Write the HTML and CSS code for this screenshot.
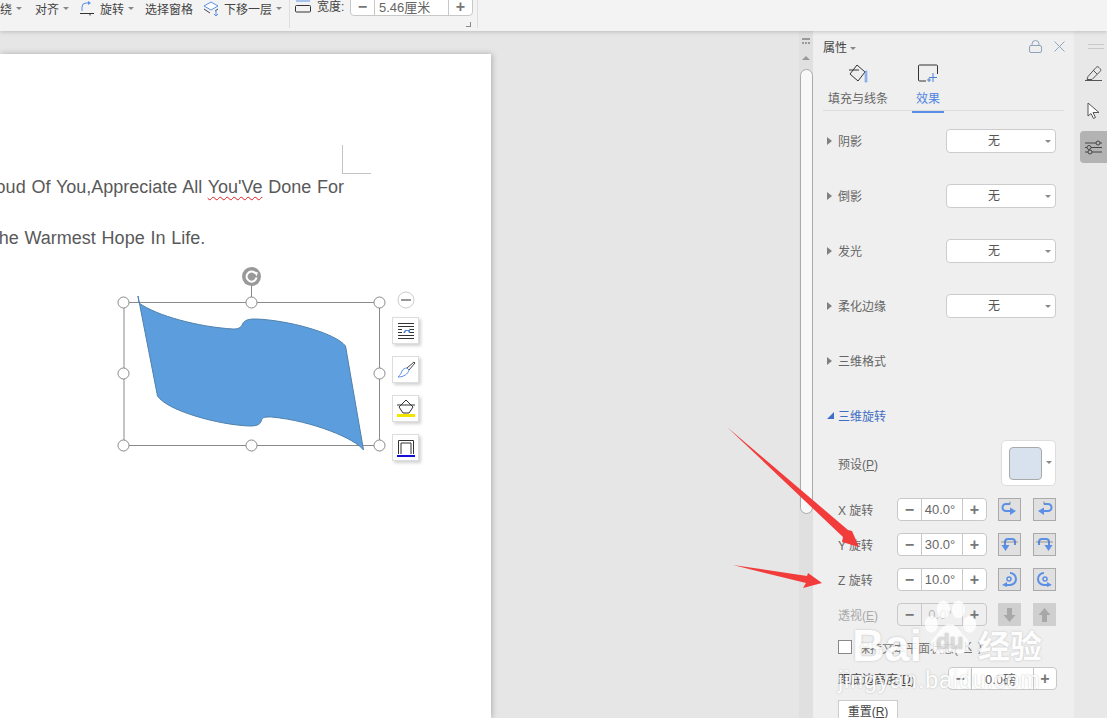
FILE: index.html
```html
<!DOCTYPE html>
<html lang="zh-CN">
  <head>
    <meta charset="UTF-8" />
    <title>属性 - 三维旋转</title>
    <link rel="stylesheet" href="styles.css">
  </head>
  <body>
    <div class="ribbon">
      <div class="rb-group">
        <span class="rb-item rb-first">环绕<i class="caret"></i></span>
        <span class="rb-item rb-align">对齐<i class="caret"></i></span>
        <span class="rb-item rb-rotate">
          <svg width="17" height="16" viewBox="0 0 17 16"><path d="M1 12.500h14M11 12.500v2" fill="none" stroke="#333"/><path d="M3 10V6a4 4 0 0 1 4-4h2" fill="none" stroke="#5b8fe6"/><path d="M9 0l3 2-3 2z" fill="#5b8fe6"/></svg>
          旋转<i class="caret"></i>
        </span>
        <span class="rb-item rb-pane">选择窗格</span>
        <span class="rb-item rb-layer">
          <svg width="17" height="16" viewBox="0 0 17 16"><path d="M8 1l7 4-7 4-7-4z" fill="#fff" stroke="#5b8fe6"/><path d="M1 8l6 4M15 8l-3 2" fill="none" stroke="#444"/><path d="M13 9v6M11 13l2 2 2-2" fill="none" stroke="#5b8fe6"/></svg>
          下移一层<i class="caret"></i>
        </span>
      </div>
      <div class="rb-group rb-size">
        <svg class="width-icon" width="16" height="14" viewBox="0 0 16 14"><rect x="0.500" y="6.500" width="15" height="6.500" rx="1" fill="none" stroke="#333"/><path d="M1 2h14" stroke="#5b8fe6"/></svg>
        <span class="rb-label">宽度:</span>
        <div class="rb-stepper">
          <span class="cell cell-btn">−</span>
          <span class="cell cell-value">5.46厘米</span>
          <span class="cell cell-btn">+</span>
        </div>
        <i class="corner"></i>
      </div>
    </div>

    <div class="main">
      <div class="canvas">
        <div class="page">
          <i class="margin-mark"></i>
          <p class="line line-one">I Am Proud Of You,Appreciate All <span class="misspelt">You'Ve</span> Done For</p>
          <p class="line line-two">You Are The Warmest Hope In Life.</p>
          <div class="drawing">
            <svg width="320" height="210" viewBox="110 264 320 210">
              <rect x="124" y="302.500" width="255.500" height="143" fill="none" stroke="#8a8a8a"/>
              <path d="M251.500 285v17" stroke="#8a8a8a"/>
              <path d="M138 296l1 7c18 13 60 24 94 26 5 0 8-1 9.500-5 2-4 6-5 13-5 32 1 80 14 90 27l18 104c-8-11-50-29-92-33-6 0-9 0-10 3-1 4-3 6-12 6-30-1-82-15-92-30z" fill="#5c9edd" stroke="#4f81ac"/>
              <circle cx="251.500" cy="276.500" r="9.500" fill="#999"/>
              <path d="M255.500 273.500a5 5 0 1 0 1 4" fill="none" stroke="#fff" stroke-width="2"/>
              <path d="M254 271.500l4 1-1.500 4z" fill="#fff"/>
              <g fill="#fff" stroke="#888">
                <circle cx="123.500" cy="302.500" r="5.500"/>
                <circle cx="251.500" cy="302.500" r="5.500"/>
                <circle cx="379.500" cy="302.500" r="5.500"/>
                <circle cx="123.500" cy="373.500" r="5.500"/>
                <circle cx="379.500" cy="373.500" r="5.500"/>
                <circle cx="123.500" cy="445.500" r="5.500"/>
                <circle cx="251.500" cy="445.500" r="5.500"/>
                <circle cx="379.500" cy="445.500" r="5.500"/>
              </g>
              <circle cx="406" cy="300" r="8" fill="#fff" stroke="#ccc"/>
              <path d="M401 300h10" stroke="#999" stroke-width="2"/>
            </svg>
            <div class="float-tools">
              <span class="tool">
                <svg width="18" height="18" viewBox="0 0 18 18"><path d="M1 1.500h16M1 4.500h16M1 13.500h16M1 16.500h16M1 7.500h4M13 7.500h4M1 10.500h4M13 10.500h4" stroke="#333"/><path d="M6 11l2-3h4l1-2v5h-1l-1-2H9l-1 2z" fill="#4f7fd6"/></svg>
              </span>
              <span class="tool">
                <svg width="20" height="20" viewBox="0 0 20 20"><path d="M18 2l1 1-6 7-2-2z" fill="#fff" stroke="#444"/><path d="M11 8l2 2c-1 4-5 7-11 7 2-2 3-3 4-6 1-2 3-3 5-3z" fill="#fff" stroke="#5b8fe6"/></svg>
              </span>
              <span class="tool">
                <svg width="20" height="20" viewBox="0 0 20 20"><path d="M10 1l7 7-4 6H7L3 8zM1 6h18" fill="#fff" stroke="#333"/><rect x="1" y="15" width="18" height="3" fill="#f2e600"/></svg>
              </span>
              <span class="tool">
                <svg width="18" height="20" viewBox="0 0 18 20"><path d="M1.500 16V2.500h15V16M4 16V5h10v11" fill="none" stroke="#333"/><rect y="17" width="18" height="2" fill="#1010d8"/></svg>
              </span>
            </div>
          </div>
        </div>
      </div>

      <div class="scrollbar">
        <i class="scroll-split"></i>
        <i class="scroll-up"></i>
        <div class="scroll-thumb"></div>
      </div>

      <div class="panel">
        <div class="panel-head">
          <span class="panel-title">属性<i class="caret"></i></span>
          <div class="panel-actions">
            <svg width="13" height="13" viewBox="0 0 13 13"><rect x="0.500" y="5.500" width="12" height="7" rx="1.500" fill="none" stroke="#8fa3bb"/><path d="M3 5.500V4a3.500 3.500 0 0 1 7 0v1.500" fill="none" stroke="#8fa3bb"/></svg>
            <svg width="11" height="11" viewBox="0 0 11 11"><path d="M0.500 0.500l10 10M10.500 0.500l-10 10" stroke="#8fa3bb"/></svg>
          </div>
        </div>
        <div class="tabs">
          <div class="tab">
            <svg width="20" height="20" viewBox="0 0 20 20"><path d="M9 1l8 7-7 9-8-7zM1 6h10" fill="none" stroke="#333"/><rect x="17" y="7" width="2" height="11" fill="#9fbde8" stroke="#5b8fe6" stroke-width="0.500"/></svg>
            <span>填充与线条</span>
          </div>
          <div class="tab tab-active">
            <svg width="20" height="20" viewBox="0 0 20 20"><path d="M8 17H1.500a1 1 0 0 1-1-1V2a1 1 0 0 1 1-1h17a1 1 0 0 1 1 1v8" fill="none" stroke="#333"/><path d="M15 9v9M11 13.500h8M11 14v4M9 16h4" stroke="#4f7fd6" fill="none"/></svg>
            <span>效果</span>
          </div>
        </div>

        <div class="section"><span class="tri"></span><span class="section-name">阴影</span><div class="select">无<i class="caret"></i></div></div>
        <div class="section"><span class="tri"></span><span class="section-name">倒影</span><div class="select">无<i class="caret"></i></div></div>
        <div class="section"><span class="tri"></span><span class="section-name">发光</span><div class="select">无<i class="caret"></i></div></div>
        <div class="section"><span class="tri"></span><span class="section-name">柔化边缘</span><div class="select">无<i class="caret"></i></div></div>
        <div class="section"><span class="tri"></span><span class="section-name">三维格式</span></div>
        <div class="section section-open"><span class="tri-open"></span><span class="section-name">三维旋转</span></div>

        <div class="preset-row">
          <span class="field-label">预设(<u>P</u>)</span>
          <div class="preset-box"><i class="preset-swatch"></i><i class="caret"></i></div>
        </div>

        <div class="rot-row">
          <span class="field-label">X 旋转</span>
          <div class="stepper"><span class="cell cell-btn">−</span><span class="cell cell-value">40.0°</span><span class="cell cell-btn">+</span></div>
          <span class="rot-btn"><svg width="17" height="17" viewBox="0 0 17 17"><path d="M9 3H5a2.500 2.500 0 0 0 0 7h4" fill="none" stroke="#5b8fe6" stroke-width="2"/><path d="M9 6.500l6 3.500-6 4z" fill="#5b8fe6"/><path d="M9 0.500v3" stroke="#888"/></svg></span>
          <span class="rot-btn"><svg width="17" height="17" viewBox="0 0 17 17"><path d="M8 3h4a2.500 2.500 0 0 1 0 7H8" fill="none" stroke="#5b8fe6" stroke-width="2"/><path d="M8 6.500L2 10l6 4z" fill="#5b8fe6"/><path d="M8 0.500v3" stroke="#888"/></svg></span>
        </div>
        <div class="rot-row">
          <span class="field-label">Y 旋转</span>
          <div class="stepper"><span class="cell cell-btn">−</span><span class="cell cell-value">30.0°</span><span class="cell cell-btn">+</span></div>
          <span class="rot-btn"><svg width="17" height="17" viewBox="0 0 17 17"><path d="M14 9V6a3 3 0 0 0-3-3H7a3 3 0 0 0-3 3v3" fill="none" stroke="#5b8fe6" stroke-width="2"/><path d="M0.500 9h8l-4 6z" fill="#5b8fe6"/><path d="M0 6h17" stroke="#666" stroke-width="0.600"/></svg></span>
          <span class="rot-btn"><svg width="17" height="17" viewBox="0 0 17 17"><path d="M3 9V6a3 3 0 0 1 3-3h4a3 3 0 0 1 3 3v3" fill="none" stroke="#5b8fe6" stroke-width="2"/><path d="M8.500 9h8l-4 6z" fill="#5b8fe6"/><path d="M0 6h17" stroke="#666" stroke-width="0.600"/></svg></span>
        </div>
        <div class="rot-row">
          <span class="field-label">Z 旋转</span>
          <div class="stepper"><span class="cell cell-btn">−</span><span class="cell cell-value">10.0°</span><span class="cell cell-btn">+</span></div>
          <span class="rot-btn"><svg width="17" height="17" viewBox="0 0 17 17"><path d="M9 2a6 6 0 0 1 0 12H5" fill="none" stroke="#5b8fe6" stroke-width="2"/><circle cx="8" cy="8" r="2" fill="none" stroke="#5b8fe6" stroke-width="1.500"/><path d="M6 11l-5 3 5 2z" fill="#5b8fe6"/></svg></span>
          <span class="rot-btn"><svg width="17" height="17" viewBox="0 0 17 17"><path d="M8 2a6 6 0 0 0 0 12h4" fill="none" stroke="#5b8fe6" stroke-width="2"/><circle cx="9" cy="8" r="2" fill="none" stroke="#5b8fe6" stroke-width="1.500"/><path d="M11 11l5 3-5 2z" fill="#5b8fe6"/></svg></span>
        </div>
        <div class="rot-row rot-row-off">
          <span class="field-label">透视(<u>E</u>)</span>
          <div class="stepper"><span class="cell cell-btn">−</span><span class="cell cell-value">0.0°</span><span class="cell cell-btn">+</span></div>
          <span class="rot-btn"><svg width="13" height="16" viewBox="0 0 13 16"><path d="M4 1h5v7h3.500l-6 7-6-7H4z" fill="#a8a8a8"/></svg></span>
          <span class="rot-btn"><svg width="13" height="16" viewBox="0 0 13 16"><path d="M4 15h5V8h3.500l-6-7-6 7H4z" fill="#a8a8a8"/></svg></span>
        </div>

        <label class="check-row"><i class="check-box"></i>保持文本平面状态(<u>K</u>)</label>
        <div class="distance-row">
          <span class="field-label field-dark">距底边高度(<u>D</u>)</span>
          <div class="stepper stepper-wide"><span class="cell cell-btn">−</span><span class="cell cell-value">0.0磅</span><span class="cell cell-btn">+</span></div>
        </div>
        <div class="reset-btn">重置(<u>R</u>)</div>
      </div>

      <div class="rail">
        <i class="rail-grip"></i>
        <span class="rail-btn rail-btn-first">
          <svg width="17" height="15" viewBox="0 0 17 15"><path d="M2 13.500l1-3 8-9c1-1 2-1 3 0l1 1c1 1 1 2 0 3l-8 8zM0 14.500h17M8 4l4 4" fill="none" stroke="#555"/></svg>
        </span>
        <span class="rail-btn">
          <svg width="13" height="18" viewBox="0 0 13 18"><path d="M1 1v13l3-2.500 2.500 5 2-1-2.500-5H12z" fill="#fff" stroke="#555"/></svg>
        </span>
        <span class="rail-btn rail-btn-on">
          <svg width="17" height="15" viewBox="0 0 17 15"><g fill="none" stroke="#444"><path d="M0 3h11M15 3h2M0 7.500h2M6 7.500h11M0 12h3M7 12h10"/><circle cx="13" cy="3" r="2"/><circle cx="4" cy="7.500" r="2"/><circle cx="5" cy="12" r="2"/></g></svg>
        </span>
      </div>
    </div>

    <!-- annotations pasted over the screenshot -->
    <svg class="arrows" width="1107" height="718" viewBox="0 0 1107 718">
      <path d="M727 427L848 530L852 531L859 547L842 542L843 537z" fill="#f23c3c"/>
      <path d="M733 565L807 576L808 573L822 583L803 588L806 583z" fill="#f23c3c"/>
    </svg>

    <div class="watermark">
      <div class="wm-logo">
        <span class="wm-bai">Bai</span>
        <svg class="wm-paw" width="54" height="58" viewBox="0 0 56 62"><g fill="#fff" fill-opacity="0.9"><ellipse cx="8" cy="26" rx="7" ry="9"/><ellipse cx="21" cy="10" rx="7" ry="9.500"/><ellipse cx="37" cy="10" rx="7" ry="9.500"/><ellipse cx="49" cy="26" rx="7" ry="9"/><path d="M28 26c8 0 10 8 17 14 7 8 2 18-8 17-4 0-6-2-9-2s-6 2-10 2c-9 0-14-9-7-17 6-6 9-14 17-14z"/></g><text x="13" y="52" class="wm-du">du</text></svg>
        <span class="wm-cn">经验</span>
      </div>
      <div class="wm-url">jingyan.baidu.com</div>
    </div>
  </body>
</html>
```

FILE: styles.css
```css
body {
  margin: 0;
  width: 1107px;
  height: 718px;
  overflow: hidden;
  position: relative;
  font-family: "Liberation Sans", "Noto Sans CJK SC", sans-serif;
  font-size: 12px;
  color: #666;
  background-color: #e6e6e6;
}

i {
  display: block;
}

.caret {
  display: inline-block;
  width: 0;
  height: 0;
  margin-left: 3px;
  vertical-align: middle;
  border-left: 3px solid transparent;
  border-right: 3px solid transparent;
  border-top: 3px solid #888;
}

/* ribbon */
.ribbon {
  display: flex;
  height: 31px;
  overflow: hidden;
  background-color: #f3f3f3;
  box-shadow: 0 1px 4px rgba(0, 0, 0, 0.18);
  position: relative;
  color: #444;
}

.rb-group {
  display: flex;
  align-items: flex-start;
  height: 28px;
}

.rb-item {
  display: flex;
  align-items: center;
  gap: 4px;
  height: 17px;
  white-space: nowrap;
}

.rb-item .caret {
  margin-left: 0;
}

.rb-first {
  margin-left: -12px;
  width: 47px;
}

.rb-align {
  width: 44px;
}

.rb-rotate {
  width: 66px;
}

.rb-pane {
  width: 58px;
}

.rb-layer {
  width: 86px;
}

.rb-size {
  position: relative;
  width: 189px;
  border-left: 1px solid #ddd;
  border-right: 1px solid #ddd;
  padding-left: 5px;
  gap: 6px;
  box-sizing: border-box;
}

.width-icon {
  margin-top: -1px;
}

.rb-label {
  line-height: 15px;
  width: 27px;
  white-space: nowrap;
}

.rb-stepper {
  display: flex;
  width: 123px;
  height: 24px;
  margin-top: -8px;
  box-sizing: border-box;
  border: 1px solid #c8c8c8;
  border-radius: 4px;
  background-color: #fff;
}

.cell {
  display: flex;
  align-items: center;
  justify-content: center;
  height: 100%;
}

.cell-btn {
  flex: 0 0 23px;
  font-size: 16px;
  font-weight: bold;
  color: #777;
}

.cell-value {
  flex: 1;
  padding-right: 4px;
  box-sizing: border-box;
  border-left: 1px solid #c8c8c8;
  border-right: 1px solid #c8c8c8;
  color: #666;
  font-size: 13px;
}

.rb-stepper .cell-value {
  justify-content: flex-start;
  padding-left: 4px;
}

.rb-stepper .cell {
  padding-top: 5px;
  box-sizing: border-box;
}

.corner {
  position: absolute;
  right: 6px;
  top: 22px;
  width: 4px;
  height: 4px;
  border-right: 1px solid #888;
  border-bottom: 1px solid #888;
}

/* main area */
.main {
  display: flex;
  height: 687px;
}

.canvas {
  width: 799px;
  overflow: hidden;
  background-color: #e6e6e6;
}

.page {
  position: relative;
  width: 491px;
  height: 664px;
  margin-top: 23px;
  padding-top: 108px;
  box-sizing: border-box;
  overflow: hidden;
  background-color: #fff;
  box-shadow: 1px 0 6px rgba(0, 0, 0, 0.25);
}

.margin-mark {
  position: absolute;
  left: 342px;
  top: 91px;
  width: 28px;
  height: 28px;
  border-left: 1px solid #c4c4c4;
  border-bottom: 1px solid #c4c4c4;
}

.line {
  margin: 0;
  height: 51px;
  line-height: 51px;
  font-size: 18px;
  color: #595959;
  white-space: nowrap;
  word-spacing: 0.8px;
}

.line-one {
  margin-left: -65px;
}

.line-two {
  margin-left: -81px;
}

.misspelt {
  text-decoration: underline wavy #e02020 1px;
  text-underline-offset: 3px;
}

.drawing {
  position: relative;
}

.drawing svg {
  display: block;
}

.drawing > svg {
  margin-left: 110px;
}

.float-tools {
  position: absolute;
  left: 392px;
  top: 53px;
  display: flex;
  flex-direction: column;
  gap: 12px;
}

.tool {
  display: flex;
  align-items: center;
  justify-content: center;
  width: 27px;
  height: 27px;
  box-sizing: border-box;
  background-color: #fff;
  border: 1px solid #ddd;
  box-shadow: 2px 2px 3px rgba(0, 0, 0, 0.18);
}

/* scrollbar */
.scrollbar {
  width: 14px;
  background-color: #e0e0e0;
  padding-top: 7px;
  box-sizing: border-box;
}

.scroll-split {
  width: 8px;
  height: 6px;
  margin: 0 auto 12px;
  border-top: 2px solid #999;
  border-bottom: 2px dotted #999;
  box-sizing: border-box;
}

.scroll-up {
  width: 0;
  height: 0;
  margin: 0 auto 9px;
  border-left: 4px solid transparent;
  border-right: 4px solid transparent;
  border-bottom: 4px solid #999;
}

.scroll-thumb {
  height: 445px;
  margin-left: 1px;
  box-sizing: border-box;
  background-color: #f8f8f8;
  border: 1px solid #aaa;
  border-radius: 7px;
}

/* property panel */
.panel {
  width: 261px;
  padding: 0 18px 0 10px;
  box-sizing: border-box;
  background-color: #efefef;
  overflow: hidden;
}

.panel-head {
  display: flex;
  align-items: center;
  justify-content: space-between;
  height: 30px;
  margin-right: -9px;
}

.panel-title {
  color: #444;
}

.panel-actions {
  display: flex;
  align-items: center;
  gap: 12px;
}

.tabs {
  display: flex;
  height: 50px;
  margin-right: -8px;
  padding-left: 5px;
  border-bottom: 1px solid #ddd;
  box-sizing: border-box;
  gap: 24px;
}

.tab {
  display: flex;
  flex-direction: column;
  align-items: center;
  padding-top: 3px;
  width: 60px;
  color: #666;
  gap: 5px;
}

.tab-active {
  width: 32px;
  color: #4f86e0;
  border-bottom: 2px solid #5b8fe6;
  height: 47px;
  box-sizing: content-box;
}

.section {
  display: flex;
  align-items: center;
  height: 55px;
  padding-left: 4px;
}

.tabs + .section {
  margin-top: 2px;
}

.tri {
  width: 0;
  height: 0;
  margin-right: 6px;
  border-top: 4px solid transparent;
  border-bottom: 4px solid transparent;
  border-left: 5px solid #808080;
}

.tri-open {
  width: 0;
  height: 0;
  margin-right: 4px;
  border-left: 7px solid transparent;
  border-bottom: 7px solid #3f6fc4;
}

.section-name {
  flex: 1;
}

.section-open .section-name {
  color: #3f6fc4;
}

.select {
  position: relative;
  width: 110px;
  height: 24px;
  line-height: 23px;
  padding-right: 14px;
  text-align: center;
  box-sizing: border-box;
  background-color: #fff;
  border: 1px solid #ccc;
  border-radius: 4px;
  color: #555;
}

.select .caret {
  position: absolute;
  right: 4px;
  top: 10px;
}

.preset-row {
  display: flex;
  align-items: center;
  justify-content: space-between;
  height: 46px;
  margin-top: -3px;
  padding-left: 15px;
}

.field-label {
  color: #666;
}

.field-dark {
  color: #444;
}

.preset-box {
  position: relative;
  width: 55px;
  height: 46px;
  box-sizing: border-box;
  padding: 6px 0 0 7px;
  background-color: #fff;
  border: 1px solid #ddd;
  border-radius: 5px;
}

.preset-swatch {
  width: 33px;
  height: 33px;
  box-sizing: border-box;
  background-color: #d8e2ef;
  border: 1px solid #aaa;
  border-radius: 4px;
}

.preset-box .caret {
  position: absolute;
  right: 3px;
  top: 20px;
}

.rot-row {
  display: flex;
  align-items: center;
  height: 23px;
  margin-top: 12px;
  padding-left: 15px;
}

.rot-row .field-label {
  width: 59px;
}

.stepper {
  display: flex;
  width: 90px;
  height: 23px;
  box-sizing: border-box;
  background-color: #fff;
  border: 1px solid #c8c8c8;
  border-radius: 4px;
  margin-right: 11px;
}

.rot-btn {
  display: flex;
  align-items: center;
  justify-content: center;
  width: 23px;
  height: 23px;
  box-sizing: border-box;
  background-color: #e0e0e0;
  border: 1px solid #aaa;
}

.rot-btn + .rot-btn {
  margin-left: 12px;
}

.rot-row-off .field-label {
  color: #aaa;
}

.rot-row-off .stepper {
  background-color: #efefef;
}

.rot-row-off .cell-value {
  color: #bbb;
}

.rot-row-off .rot-btn {
  background-color: #cfcfcf;
  border-color: #cfcfcf;
}

.check-row {
  display: flex;
  align-items: center;
  gap: 6px;
  height: 14px;
  margin-top: 14px;
  padding-left: 15px;
  color: #777;
  white-space: nowrap;
}

.check-box {
  width: 12px;
  height: 12px;
  background-color: #fff;
  border: 1px solid #888;
}

.distance-row {
  display: flex;
  align-items: center;
  justify-content: space-between;
  height: 23px;
  margin-top: 13px;
  padding-left: 15px;
  margin-right: -1px;
}

.stepper-wide {
  width: 109px;
  margin-right: 0;
}

.stepper-wide .cell-btn {
  flex-basis: 22px;
}

.reset-btn {
  width: 60px;
  height: 24px;
  line-height: 22px;
  margin: 10px 0 0 15px;
  text-align: center;
  box-sizing: border-box;
  color: #444;
  background-color: #fff;
  border: 1px solid #ccc;
}

/* right rail */
.rail {
  flex: 1;
  display: flex;
  flex-direction: column;
  align-items: flex-end;
  padding-top: 13px;
  background-color: #e8e8e8;
}

.rail-grip {
  width: 16px;
  height: 3px;
  margin: 0 3px 8px 0;
  border-top: 1px solid #c8c8c8;
  border-bottom: 1px solid #c8c8c8;
}

.rail-btn {
  display: flex;
  align-items: center;
  justify-content: center;
  width: 27px;
  height: 32px;
  margin-bottom: 4px;
}

.rail-btn-first {
  margin-bottom: 6px;
}

.rail-btn-on {
  background-color: #b3b3b3;
  border-radius: 4px 0 0 4px;
}

/* overlays */
.arrows {
  position: absolute;
  left: 0;
  top: 0;
  pointer-events: none;
}

.watermark {
  position: absolute;
  left: 838px;
  top: 598px;
  width: 215px;
  color: #fff;
  opacity: 0.88;
  text-shadow: 0 0 2px rgba(140, 140, 140, 0.6);
}

.wm-logo {
  display: flex;
  align-items: flex-end;
  height: 66px;
}

.wm-bai {
  font-size: 45px;
  line-height: 50px;
  font-weight: bold;
  margin: 0 0 -7px 14px;
  width: 71px;
}

.wm-paw {
  margin-bottom: 6px;
}

.wm-du {
  font-size: 24px;
  font-weight: bold;
  fill: #d8d8d8;
}

.wm-cn {
  font-size: 32px;
  line-height: 46px;
  font-weight: bold;
  margin: 0 0 -3px 1px;
  font-family: "Noto Sans CJK SC", sans-serif;
}

.wm-url {
  font-size: 23px;
  line-height: 28px;
  letter-spacing: 1px;
  margin-top: 2px;
  white-space: nowrap;
}
```
